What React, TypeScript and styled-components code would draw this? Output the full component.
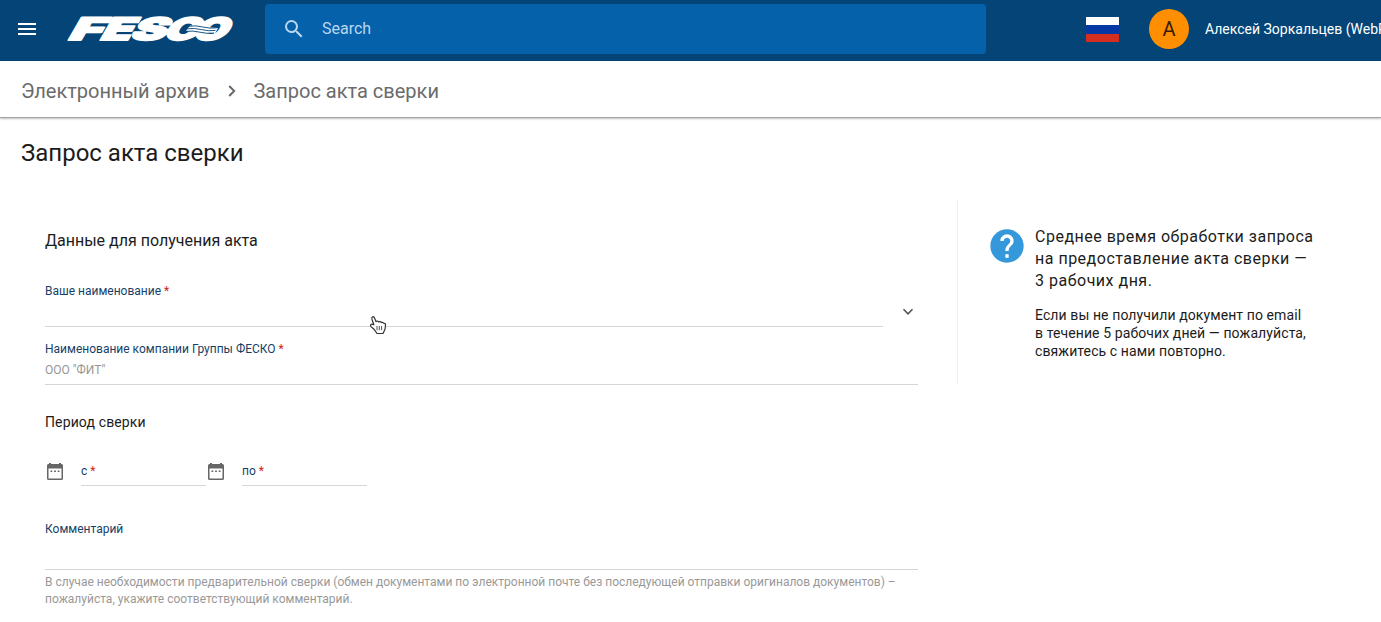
import React from "react";
import styled, { createGlobalStyle } from "styled-components";
import { MdMenu, MdSearch, MdHelp } from "react-icons/md";

const GlobalStyle = createGlobalStyle`
  * { box-sizing: border-box; }
  html, body { margin: 0; padding: 0; overflow: hidden; background: #fff; }
  body { font-family: Roboto, "Liberation Sans", sans-serif; color: #1c1c1c; }
`;

const Page = styled.div`
  height: 622px;
  overflow: hidden;
  background: #fff;
`;

const Header = styled.header`
  display: flex;
  align-items: flex-start;
  height: 61px;
  background: #044477;
  color: #fff;
  white-space: nowrap;

  > * { flex: none; }
`;

const MenuButton = styled.div`
  display: flex;
  margin: 17px 16px 0 15px;
`;

const LogoLink = styled.div`
  display: flex;
  width: 172px;
  margin: 1px 0 0 8px;
`;

const SearchBox = styled.div`
  display: flex;
  align-items: center;
  width: 721px;
  height: 50px;
  margin: 4px 0 0 30px;
  padding-left: 17px;
  border-radius: 4px;
  background: #0561aa;
  color: #b9d7ef;
`;

const SearchLabel = styled.span`
  margin: -2px 0 0 16px;
  font-size: 16px;
`;

const Flag = styled.div`
  display: grid;
  grid-template-rows: repeat(3, 1fr);
  width: 33px;
  height: 25px;
  margin: 17px 0 0 100px;
`;

const Stripe = styled.div<{ $color: string }>`
  background: ${(p) => p.$color};
`;

const Avatar = styled.div`
  display: flex;
  align-items: center;
  justify-content: center;
  width: 40px;
  height: 40px;
  margin: 9px 0 0 30px;
  border-radius: 50%;
  background: #ff8f00;
  color: #3a1a05;
  font-size: 20px;
`;

const UserName = styled.span`
  margin: 19px 0 0 16px;
  font-size: 14px;
  line-height: 20px;
`;

const Breadcrumbs = styled.nav`
  display: flex;
  align-items: center;
  height: 57px;
  padding: 3px 0 0 21px;
  border-bottom: 1px solid #a3a3a3;
  box-shadow: 0 1px 2px rgba(0, 0, 0, 0.25);
  color: #6b6b6b;
  font-size: 20px;
`;

const CrumbArrow = styled.svg`
  margin: 0 17px 0 19px;
`;

const Title = styled.h1`
  margin: 19px 0 0 21px;
  font-size: 24px;
  font-weight: 400;
  line-height: 32px;
`;

const Content = styled.main`
  display: flex;
  align-items: flex-start;
  margin-top: 31px;
  padding-left: 45px;
`;

const Form = styled.div`
  width: 873px;
  padding-top: 29px;
`;

const SectionTitle = styled.h2<{ $size: number; $top?: number }>`
  margin: ${(p) => p.$top ?? 0}px 0 0;
  font-size: ${(p) => p.$size}px;
  font-weight: 400;
  line-height: 24px;
  letter-spacing: ${(p) => (p.$size === 14 ? 0.13 : 0)}px;
`;

const SelectRow = styled.div`
  display: flex;
  justify-content: space-between;
  margin-top: 30px;
`;

const Field = styled.div<{ $width: number; $height: number; $top?: number }>`
  width: ${(p) => p.$width}px;
  height: ${(p) => p.$height}px;
  margin-top: ${(p) => p.$top ?? 0}px;
  border-bottom: 1px solid #d6d6d6;
`;

const Label = styled.div`
  font-size: 12px;
  line-height: 16px;
  color: #173f68;
`;

const Star = styled.span`
  color: #d01c1c;
`;

const Value = styled.div`
  margin-top: 5px;
  font-size: 12px;
  line-height: 16px;
  color: #969696;
`;

const SelectArrow = styled.svg`
  margin: 25px 4px 0 0;
`;

const DateRow = styled.div`
  display: flex;
  margin-top: 29px;
`;

const CalendarIcon = styled.svg`
  flex: none;
  width: 20px;
  margin: -1px 16px 0 0;
`;

const Hint = styled.p`
  margin: 4px 0 0;
  font-size: 12px;
  line-height: 17px;
  white-space: nowrap;
  color: #999;
`;

const Aside = styled.aside`
  display: flex;
  align-items: flex-start;
  height: 184px;
  margin-left: 39px;
  padding: 26px 0 0 29px;
  border-left: 1px solid #f0f0f0;
`;

const AsideText = styled.div`
  margin-left: 8px;
  white-space: nowrap;
`;

const Lead = styled.p`
  margin: 0;
  font-size: 16px;
  line-height: 22px;
  letter-spacing: 0.5px;
`;

const Note = styled.p`
  margin: 14px 0 0;
  font-size: 14px;
  line-height: 18px;
  letter-spacing: 0.1px;
`;

const Pointer = styled.svg`
  position: absolute;
  left: 369px;
  top: 315px;
`;

const letters = [
  { c: "F", x: 0, w: 33 },
  { c: "E", x: 32, w: 31 },
  { c: "S", x: 62, w: 35 },
  { c: "C", x: 95, w: 34 },
  { c: "O", x: 124, w: 34 },
];

const Logo = () => (
  <svg width="172" height="56" viewBox="0 0 172 56" overflow="visible">
    <g
      transform="translate(0.500 39.400) skewX(-30)"
      fontFamily="Inter, Roboto, sans-serif"
      fontSize="31"
      fontWeight="900"
      fill="#fff"
      stroke="#fff"
      strokeWidth="1.800"
      strokeLinejoin="round"
    >
      {letters.map((l) => (
        <text key={l.c} x={l.x + 3} y="0" textLength={l.w} lengthAdjust="spacingAndGlyphs">
          {l.c}
        </text>
      ))}
    </g>
    <path d="M127 24.500l28 2.500-3 5.500-29-2.500z" fill="#fff" />
    <path
      d="M126 25.200q7-1 14 .8t14 .8M124.500 27.800q7-1 14 .8t14 .8M123 30.400q7-1 14 .8t14 .8"
      fill="none"
      stroke="#044477"
      strokeWidth="0.900"
    />
  </svg>
);

const Calendar = () => (
  <CalendarIcon width="20" height="20" viewBox="0 0 20 20">
    <path
      fill="#666"
      fillRule="evenodd"
      d="M4 1h2v1h8V1h2v1h.5a1.500 1.500 0 0 1 1.500 1.500v13A1.500 1.500 0 0 1 16.500 18h-13A1.500 1.500 0 0 1 2 16.500v-13A1.500 1.500 0 0 1 3.500 2H4zM3.500 6.500v10h13v-10z"
    />
    <path fill="#666" d="M5.500 8.600h1.800v1.500H5.500zM9.100 8.600h1.800v1.500H9.100zM12.700 8.600h1.800v1.500h-1.800z" />
  </CalendarIcon>
);

export default function App() {
  return (
    <Page>
      <GlobalStyle />
      <Header>
        <MenuButton><MdMenu size={24} /></MenuButton>
        <LogoLink><Logo /></LogoLink>
        <SearchBox>
          <MdSearch size={24} />
          <SearchLabel>Search</SearchLabel>
        </SearchBox>
        <Flag>
          <Stripe $color="#fff" />
          <Stripe $color="#0638a5" />
          <Stripe $color="#d52d20" />
        </Flag>
        <Avatar>А</Avatar>
        <UserName>Алексей Зоркальцев (WebP</UserName>
      </Header>
      <Breadcrumbs>
        <span>Электронный архив</span>
        <CrumbArrow width="8" height="12" viewBox="0 0 8 12">
          <path d="M1.200 1l5 5-5 5" fill="none" stroke="#666" strokeWidth="1.900" />
        </CrumbArrow>
        <span>Запрос акта сверки</span>
      </Breadcrumbs>
      <Title>Запрос акта сверки</Title>
      <Content>
        <Form>
          <SectionTitle $size={16}>Данные для получения акта</SectionTitle>
          <SelectRow>
            <Field $width={838} $height={44}>
              <Label>Ваше наименование <Star>*</Star></Label>
            </Field>
            <SelectArrow width="12" height="8" viewBox="0 0 12 8">
              <path d="M1.500 1.200L6 5.800l4.500-4.600" fill="none" stroke="#555" strokeWidth="1.600" />
            </SelectArrow>
          </SelectRow>
          <Field $width={873} $height={44} $top={14}>
            <Label>Наименование компании Группы ФЕСКО <Star>*</Star></Label>
            <Value>ООО "ФИТ"</Value>
          </Field>
          <SectionTitle $size={14} $top={25}>Период сверки</SectionTitle>
          <DateRow>
            <Calendar />
            <Field $width={125} $height={23}>
              <Label>с <Star>*</Star></Label>
            </Field>
            <Calendar />
            <Field $width={125} $height={23}>
              <Label>по <Star>*</Star></Label>
            </Field>
          </DateRow>
          <Field $width={873} $height={49} $top={35}>
            <Label>Комментарий</Label>
          </Field>
          <Hint>
            В случае необходимости предварительной сверки (обмен документами по электронной почте без последующей отправки оригиналов документов) –<br />
            пожалуйста, укажите соответствующий комментарий.
          </Hint>
        </Form>
        <Aside>
          <MdHelp size={40} color="#3598db" />
          <AsideText>
            <Lead>
              Среднее время обработки запроса<br />
              на предоставление акта сверки —<br />
              3 рабочих дня.
            </Lead>
            <Note>
              Если вы не получили документ по email<br />
              в течение 5 рабочих дней — пожалуйста,<br />
              свяжитесь с нами повторно.
            </Note>
          </AsideText>
        </Aside>
      </Content>
      <Pointer width="18" height="20" viewBox="0 0 18 20">
        <path
          d="M4.800 9.800L3 4.500C2.200 1.700 4.500.7 5.500 3l1.500 3.600c.8-1 2.300-.6 2.700.3 1-.7 2.300-.2 2.700.7 1-.6 2.100 0 2.400.8 1.200-.3 1.900.6 1.700 1.800L16 14.200 14 18.500H8l-3-4.300-3-2.600c-1.200-1.800 0-3.200 2.800-1.800z"
          fill="#fff"
          stroke="#333"
          strokeWidth="1.200"
          strokeLinejoin="round"
        />
        <path d="M8 11v4.200M10.300 11v4.200M12.600 11v4.200" stroke="#444" strokeWidth=".9" />
      </Pointer>
    </Page>
  );
}
